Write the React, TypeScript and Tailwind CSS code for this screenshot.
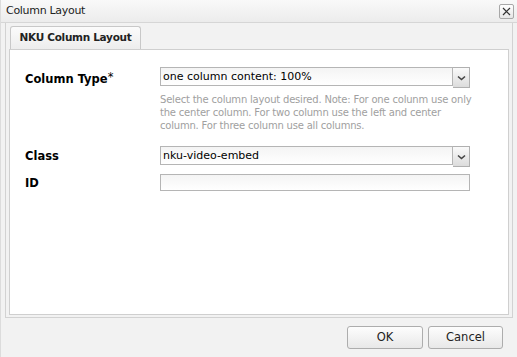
import React from "react";

const font = "font-['Tahoma','DejaVu_Sans',sans-serif]";

const Chevron = () => (
  <svg width="9" height="6" viewBox="0 0 9 6">
    <path d="M1 1.5 L4.5 4.5 L8 1.5" stroke="#444" strokeWidth="1.6" fill="none" />
  </svg>
);

const SelectBox = ({ value }: { value: string }) => (
  <div className="flex h-[20px] w-[310px]">
    <div className="flex-1 h-[19px] border border-[#b5b5b5] bg-gradient-to-b from-[#f4f4f4] to-white pl-[2px] text-[11px] leading-[17px] text-black">
      {value}
    </div>
    <div className="flex h-[21px] w-[17px] items-center justify-center border border-[#b0b0b0] border-l-0 bg-gradient-to-b from-[#fafafa] to-[#dcdcdc]">
      <Chevron />
    </div>
  </div>
);

export default function App() {
  return (
    <div className={`w-[517px] h-[357px] bg-[#f2f2f2] ${font} flex flex-col border-l border-[#dcdcdc]`}>
      {/* title bar */}
      <div className="flex h-[23px] items-center justify-between border-b border-[#d6d6d6] bg-gradient-to-b from-[#f9f9f9] to-[#ececec] pl-[5px] pr-[3px]">
        <span className="text-[11px] tracking-[-0.3px] text-[#222]">Column Layout</span>
        <div className="flex h-[15px] w-[15px] items-center justify-center rounded-[2px] border border-[#a8a8a8] bg-gradient-to-b from-white to-[#e6e6e6]">
          <svg width="9" height="9" viewBox="0 0 9 9">
            <path d="M1 1 L8 8 M8 1 L1 8" stroke="#333" strokeWidth="1.2" />
          </svg>
        </div>
      </div>

      {/* tab panel */}
      <div className="mx-[4px] flex flex-col border border-t-0 border-[#d2d2d2] px-[3px] pb-[2px] h-[295px]">
        <div className="flex h-[26px] items-end pl-[1px]">
          <div className="flex h-[23px] w-[131px] items-center justify-center rounded-t-[3px] border border-b-0 border-[#c8c8c8] bg-gradient-to-b from-[#fbfbfb] to-[#ededed] text-[10.5px] tracking-[-0.3px] font-bold text-[#222]">
            NKU Column Layout
          </div>
        </div>
        <div className="flex-1 border border-[#cfcfcf] bg-white px-[15px] pt-[17px]">
          <div className="flex">
            <div className="w-[135px] pt-[2px] text-[11.5px] font-bold text-black">
              Column Type<span className="font-normal align-[2px]">*</span>
            </div>
            <div className="flex flex-col">
              <SelectBox value="one column content: 100%" />
              <p className="mt-[6px] w-[316px] text-[10px] tracking-[-0.2px] leading-[13px] text-[#a0a0a0]">
                Select the column layout desired. Note: For one colunm use only the center column. For two column use the left and center column. For three column use all columns.
              </p>
            </div>
          </div>
          <div className="mt-[14px] flex">
            <div className="w-[135px] pt-[2px] text-[11.5px] font-bold text-black">Class</div>
            <SelectBox value="nku-video-embed" />
          </div>
          <div className="mt-[8px] flex">
            <div className="w-[135px] pt-[1px] text-[11.5px] font-bold text-black">ID</div>
            <div className="h-[17px] w-[310px] border border-[#b5b5b5] bg-gradient-to-b from-[#f4f4f4] to-white" />
          </div>
        </div>
      </div>

      {/* footer */}
      <div className="flex flex-1 items-center justify-end gap-[5px] pr-[14px]">
        <button className="h-[23px] w-[76px] rounded-[3px] border border-[#adadad] bg-gradient-to-b from-[#fdfdfd] to-[#e8e8e8] text-[11.5px] text-[#222]">
          OK
        </button>
        <button className="h-[23px] w-[75px] rounded-[3px] border border-[#adadad] bg-gradient-to-b from-[#fdfdfd] to-[#e8e8e8] text-[11.5px] text-[#222]">
          Cancel
        </button>
      </div>
    </div>
  );
}
